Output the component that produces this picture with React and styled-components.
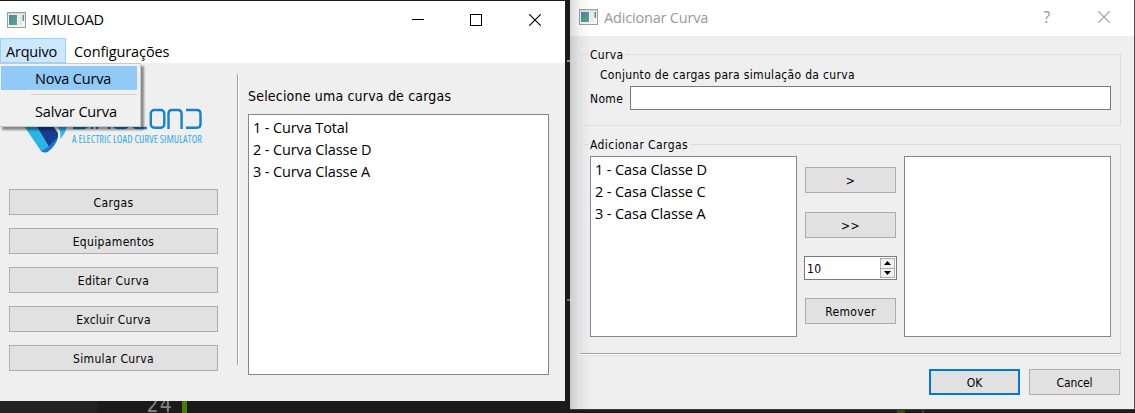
import React from "react";
import styled, { createGlobalStyle, css } from "styled-components";

const Global = createGlobalStyle`
  * { box-sizing: border-box; }
  body { margin: 0; overflow: hidden; }
`;

const shellFont = css`
  font-family: "DejaVu Sans Condensed", "DejaVu Sans", sans-serif;
  font-stretch: condensed;
  font-size: 12px;
  letter-spacing: 0.32px;
`;

const Desktop = styled.main`
  position: relative;
  width: 1135px;
  height: 413px;
  overflow: hidden;
  background: #1b1b1b;
  color: #000;
  font-family: "Open Sans", "Noto Sans", sans-serif;
  font-size: 14.5px;
  letter-spacing: -0.12px;
  white-space: nowrap;
`;

/* code editor visible behind the windows */
const Editor = styled.div`
  position: absolute;
  inset: 389px 0 0 0;
  display: flex;
`;
const EditorSide = styled.div`
  width: 97px;
  background: #222223;
`;
const LineNumber = styled.div`
  width: 85px;
  padding: 0 9px 0 0;
  text-align: right;
  color: #858585;
  font: 21px/32px "DejaVu Sans Condensed", sans-serif;
  font-stretch: condensed;
  letter-spacing: 1.2px;
`;
const Gutter = styled.div`
  width: ${(p) => p.$w}px;
  margin-left: ${(p) => p.$gap || 0}px;
  background: ${(p) => p.$color};
`;
const Fleck = styled.i`
  position: absolute;
  left: 567px;
  top: ${(p) => p.$y}px;
  width: 3px;
  height: 2px;
  background: ${(p) => p.$color};
`;

const Window = styled.section`
  position: absolute;
  left: ${(p) => p.$x}px;
  top: ${(p) => p.$y}px;
  width: ${(p) => p.$w}px;
  height: ${(p) => p.$h}px;
  display: flex;
  flex-direction: column;
  background: #efefef;
`;
const Dialog = styled(Window)`
  border-right: 1px solid #4a4a4a;
  border-bottom: 1px solid #3c3c3c;
  &::before {
    content: "";
    position: absolute;
    inset: 0 auto 0 0;
    width: 21px;
    background: linear-gradient(90deg, rgba(0, 0, 0, 0.15), rgba(0, 0, 0, 0.05) 45%, transparent);
  }
`;
const TitleBar = styled.header`
  display: flex;
  align-items: center;
  flex: none;
  height: ${(p) => p.$h}px;
  padding: 0 ${(p) => p.$right}px ${(p) => p.$drop || 0}px ${(p) => p.$left}px;
  background: #fff;
  color: ${(p) => p.$color || "#000"};
`;
const Title = styled.h1`
  flex: 1;
  margin: 0 0 0 6px;
  font: inherit;
  letter-spacing: ${(p) => p.$track}px;
`;
const Controls = styled.div`
  display: flex;
  align-items: center;
  gap: ${(p) => p.$gap}px;
  svg { display: block; }
  svg:nth-last-child(3) { margin-right: -1px; }
`;
const Help = styled.span`
  font-size: 15.5px;
  line-height: 18px;
`;

const MenuBar = styled.nav`
  display: flex;
  flex: none;
  height: 25px;
  background: #fff;
`;
const MenuTitle = styled.div`
  display: flex;
  align-items: center;
  padding: 1px 8px 0 ${(p) => (p.$open ? 5 : 8)}px;
  border: 1px solid ${(p) => (p.$open ? "#99d1ff" : "transparent")};
  border-left: ${(p) => (p.$open ? 1 : 0)}px solid #99d1ff;
  background: ${(p) => (p.$open ? "#cce8ff" : "transparent")};
  letter-spacing: ${(p) => p.$track}px;
`;
const Menu = styled.div`
  position: absolute;
  z-index: 2;
  left: -1px;
  top: 62px;
  width: 142px;
  height: 64px;
  padding: 2px 3px 2px 1px;
  border: 1px solid #c8c8c8;
  background: #f0f0f0;
  box-shadow: 3px 3px 2px rgba(0, 0, 0, 0.42);
`;
const MenuItem = styled.div`
  height: 24px;
  padding: 1px 0 0 34px;
  line-height: 24px;
  letter-spacing: -0.18px;
  background: ${(p) => (p.$active ? "#91c9f7" : "transparent")};
`;
const MenuRule = styled.hr`
  height: 1px;
  margin: 4px 0 4px 30px;
  border: 0;
  background: #d0d0d0;
`;

const Body = styled.div`
  display: flex;
  flex: 1;
`;
const Sidebar = styled.div`
  display: flex;
  flex-direction: column;
  gap: 13px;
  width: 209px;
  margin-left: 9px;
`;
const Logo = styled.svg`
  display: block;
  width: 209px;
  height: 113px;
`;
const Tagline = styled.text`
  font-family: "Open Sans", sans-serif;
  font-stretch: condensed;
  font-size: 10.3px;
  letter-spacing: 0;
  fill: #2fabe2;
`;
const Divider = styled.div`
  width: 2px;
  height: 291px;
  margin: 11px 9px 0 19px;
  background: linear-gradient(90deg, #a0a0a0 50%, #fff 50%);
`;
const CurvePane = styled.div`
  width: 301px;
`;
const PaneLabel = styled.div`
  ${shellFont}
  font-size: 14px;
  letter-spacing: 0.19px;
  height: 51px;
  padding-top: 24px;
  line-height: 18px;
`;

const Button = styled.button`
  ${shellFont}
  flex: none;
  height: 26px;
  width: ${(p) => (p.$w ? p.$w + "px" : "auto")};
  padding: 2px 0 0;
  color: #000;
  background: #e1e1e1;
  border: ${(p) => (p.$primary ? "2px solid #0078d7" : "1px solid #adadad")};
  letter-spacing: ${(p) => p.$track ?? 0.35}px;
`;
const List = styled.ul`
  width: ${(p) => p.$w}px;
  height: ${(p) => p.$h}px;
  margin: 0;
  padding: 2px 4px;
  list-style: none;
  background: #fff;
  border: 1px solid #828790;
`;
const Item = styled.li`
  height: 22px;
  line-height: 21px;
`;

const DialogBody = styled.div`
  position: relative;
  display: flex;
  flex-direction: column;
  padding: 11px 13px 0 10px;
`;
const Group = styled.fieldset`
  ${shellFont}
  min-width: 0;
  height: ${(p) => p.$h}px;
  margin: 0 0 ${(p) => p.$after || 0}px;
  padding: 0 9px;
  border: 1px solid #dcdcdc;
`;
const Legend = styled.legend`
  height: 15px;
  margin-left: -2px;
  padding: 0 2px;
  line-height: 16px;
  letter-spacing: ${(p) => p.$track}px;
`;
const Hint = styled.div`
  padding: 5px 0 0 10px;
  line-height: 17px;
`;
const Field = styled.label`
  display: flex;
  align-items: center;
  margin-top: 2px;
`;
const FieldName = styled.span`
  width: 40px;
  padding-top: 1px;
`;
const TextBox = styled.input`
  flex: 1;
  height: 24px;
  padding: 0 3px;
  background: #fff;
  border: 1px solid #7a7a7a;
`;
const Transfer = styled.div`
  display: flex;
  justify-content: space-between;
  margin-top: 4px;
  font-family: "Open Sans", "Noto Sans", sans-serif;
  font-stretch: normal;
  font-size: 14.5px;
  letter-spacing: -0.1px;
`;
const Actions = styled.div`
  display: flex;
  flex-direction: column;
  align-items: center;
  width: 93px;
  padding-top: 11px;
  gap: 18px;
  button:first-child { margin-bottom: 1px; }
`;
const Spin = styled.div`
  ${shellFont}
  display: flex;
  justify-content: space-between;
  width: 93px;
  height: 24px;
  padding: 1px 1px 1px 2px;
  line-height: 22px;
  background: #fff;
  border: 1px solid #7a7a7a;
`;
const Steps = styled.div`
  display: flex;
  flex-direction: column;
  width: 15px;
  height: 20px;
  border: 1px solid #adadad;
  background: #f0f0f0;
`;
const Step = styled.div`
  display: flex;
  align-items: center;
  justify-content: center;
  flex: 1;
  & + & { border-top: 1px solid #adadad; }
`;
const Rule = styled.div`
  position: relative;
  height: 3px;
  margin-top: -3px;
  border-top: 1px solid #a0a0a0;
  border-bottom: 1px solid #dcdcdc;
  background: #fff;
`;
const Footer = styled.footer`
  display: flex;
  justify-content: flex-end;
  gap: 9px;
  margin: 13px 1px 0 0;
`;

function AppIcon() {
  return (
    <svg width="19" height="16" viewBox="0 0 19 16">
      <defs>
        <linearGradient id="pane" x1="0" y1="0" x2="1" y2="1">
          <stop offset="0" stopColor="#4e83ad" />
          <stop offset="1" stopColor="#57ad74" />
        </linearGradient>
      </defs>
      <rect x=".5" y=".5" width="18" height="15" fill="#f3f4f5" stroke="#9a9fa5" />
      <rect x="1" y="1" width="17" height="1.5" fill="#d5d9de" />
      <rect x="2" y="3" width="8" height="10" fill="url(#pane)" />
      <rect x="11" y="3" width="4" height="10" fill="#e8e8ea" />
      <rect x="15.5" y="3" width="1.6" height="6" fill="url(#pane)" />
    </svg>
  );
}

function Brand() {
  return (
    <Logo viewBox="9 63 209 113">
      <path d="M24 126 34 122 50 149Q46 154 41 151Z" fill="#27b5e9" />
      <path d="M34 122H50L58 133Q59 140 51 149L49 147Z" fill="#173d92" />
      <path d="M58 137Q57 143 49 151Q45 154 41 151Q45 150 49 146Q54 141 58 137Z" fill="#1b75c9" />
      <path d="M57 122H69L66 129Q65 134 60 139Q62 132 57 126Z" fill="#2bb9ec" />
      <g fill="none" stroke="#1482cd" strokeWidth="2.4" strokeLinejoin="round">
        <path d="M88 110H77Q74 110 74 114T78 119H84Q88 119 88 123T84 128H73" />
        <path d="M92 109V129M97 129V113Q97 110 100 110H106Q109 110 109 113V129" />
        <path d="M114 109V124Q114 128 118 128H124Q128 128 128 124V109" />
        <path d="M133 109V124Q133 128 137 128H147" />
        <rect x="150.8" y="110" width="13.5" height="17.7" rx="3.5" />
        <path d="M168.5 129V114Q168.5 110 172 110H178Q181.6 110 181.6 114V129" />
        <path d="M186 110H197Q200.5 110 200.5 114V124Q200.5 127.7 197 127.7H186" />
      </g>
      <Tagline x="72" y="142.5" textLength="130">A ELECTRIC LOAD CURVE SIMULATOR</Tagline>
    </Logo>
  );
}

function Cross({ color }) {
  return (
    <svg width="12" height="12" viewBox="0 0 12 12">
      <path d="M.2.2 11.8 11.8M11.8.2.2 11.8" stroke={color} strokeWidth="1.1" />
    </svg>
  );
}

const curves = ["1 - Curva Total", "2 - Curva Classe D", "3 - Curva Classe A"];
const loads = ["1 - Casa Classe D", "2 - Casa Classe C", "3 - Casa Classe A"];

export default function App() {
  return (
    <Desktop>
      <Global />
      <Editor>
        <EditorSide />
        <LineNumber>24</LineNumber>
        <Gutter $w={5} $color="#487e02" />
        <Gutter $w={8} $gap={710} $color="#2f4f08" />
        <Gutter $w={2} $gap={17} $color="#404040" />
      </Editor>
      <Fleck $y={60} $color="#8b939c" />
      <Fleck $y={299} $color="#3f78b8" />

      <Window $x={0} $y={1} $w={565} $h={400}>
        <TitleBar $h={37} $left={7} $right={24}>
          <AppIcon />
          <Title $track={-0.3}>SIMULOAD</Title>
          <Controls $gap={47}>
            <svg width="12" height="12"><path d="M0 5.5H12" stroke="#000" /></svg>
            <svg width="12" height="12"><rect x=".5" y=".5" width="11" height="11" fill="none" stroke="#000" /></svg>
            <Cross color="#000" />
          </Controls>
        </TitleBar>
        <MenuBar>
          <MenuTitle $open $track={-0.2}>Arquivo</MenuTitle>
          <MenuTitle $track={-0.12}>Configurações</MenuTitle>
        </MenuBar>
        <Menu>
          <MenuItem $active>Nova Curva</MenuItem>
          <MenuRule />
          <MenuItem>Salvar Curva</MenuItem>
        </Menu>
        <Body>
          <Sidebar>
            <Brand />
            <Button $track={0.4}>Cargas</Button>
            <Button>Equipamentos</Button>
            <Button>Editar Curva</Button>
            <Button $track={0.25}>Excluir Curva</Button>
            <Button>Simular Curva</Button>
          </Sidebar>
          <Divider />
          <CurvePane>
            <PaneLabel>Selecione uma curva de cargas</PaneLabel>
            <List $w={301} $h={261}>{curves.map((c) => <Item key={c}>{c}</Item>)}</List>
          </CurvePane>
        </Body>
      </Window>

      <Dialog $x={570} $y={0} $w={565} $h={410}>
        <TitleBar $h={36} $left={9} $right={24} $drop={2} $color="#999">
          <AppIcon />
          <Title $track={-0.18}>Adicionar Curva</Title>
          <Controls $gap={48}>
            <Help>?</Help>
            <Cross color="#999" />
          </Controls>
        </TitleBar>
        <DialogBody>
          <Group $h={79} $after={11}>
            <Legend $track={0.3}>Curva</Legend>
            <Hint>Conjunto de cargas para simulação da curva</Hint>
            <Field>
              <FieldName>Nome</FieldName>
              <TextBox />
            </Field>
          </Group>
          <Group $h={219}>
            <Legend $track={0.42}>Adicionar Cargas</Legend>
            <Transfer>
              <List $w={207} $h={181}>{loads.map((c) => <Item key={c}>{c}</Item>)}</List>
              <Actions>
                <Button $w={91}>&gt;</Button>
                <Button $w={91}>&gt;&gt;</Button>
                <Spin>
                  <span>10</span>
                  <Steps>
                    <Step><svg width="7" height="4"><path d="M0 4 3.5 0 7 4Z" /></svg></Step>
                    <Step><svg width="7" height="4"><path d="M0 0 3.5 4 7 0Z" /></svg></Step>
                  </Steps>
                </Spin>
                <Button $w={91}>Remover</Button>
              </Actions>
              <List $w={207} $h={181} />
            </Transfer>
          </Group>
          <Rule />
          <Footer>
            <Button $w={91} $primary $track={0}>OK</Button>
            <Button $w={91} $track={-0.1}>Cancel</Button>
          </Footer>
        </DialogBody>
      </Dialog>
    </Desktop>
  );
}
